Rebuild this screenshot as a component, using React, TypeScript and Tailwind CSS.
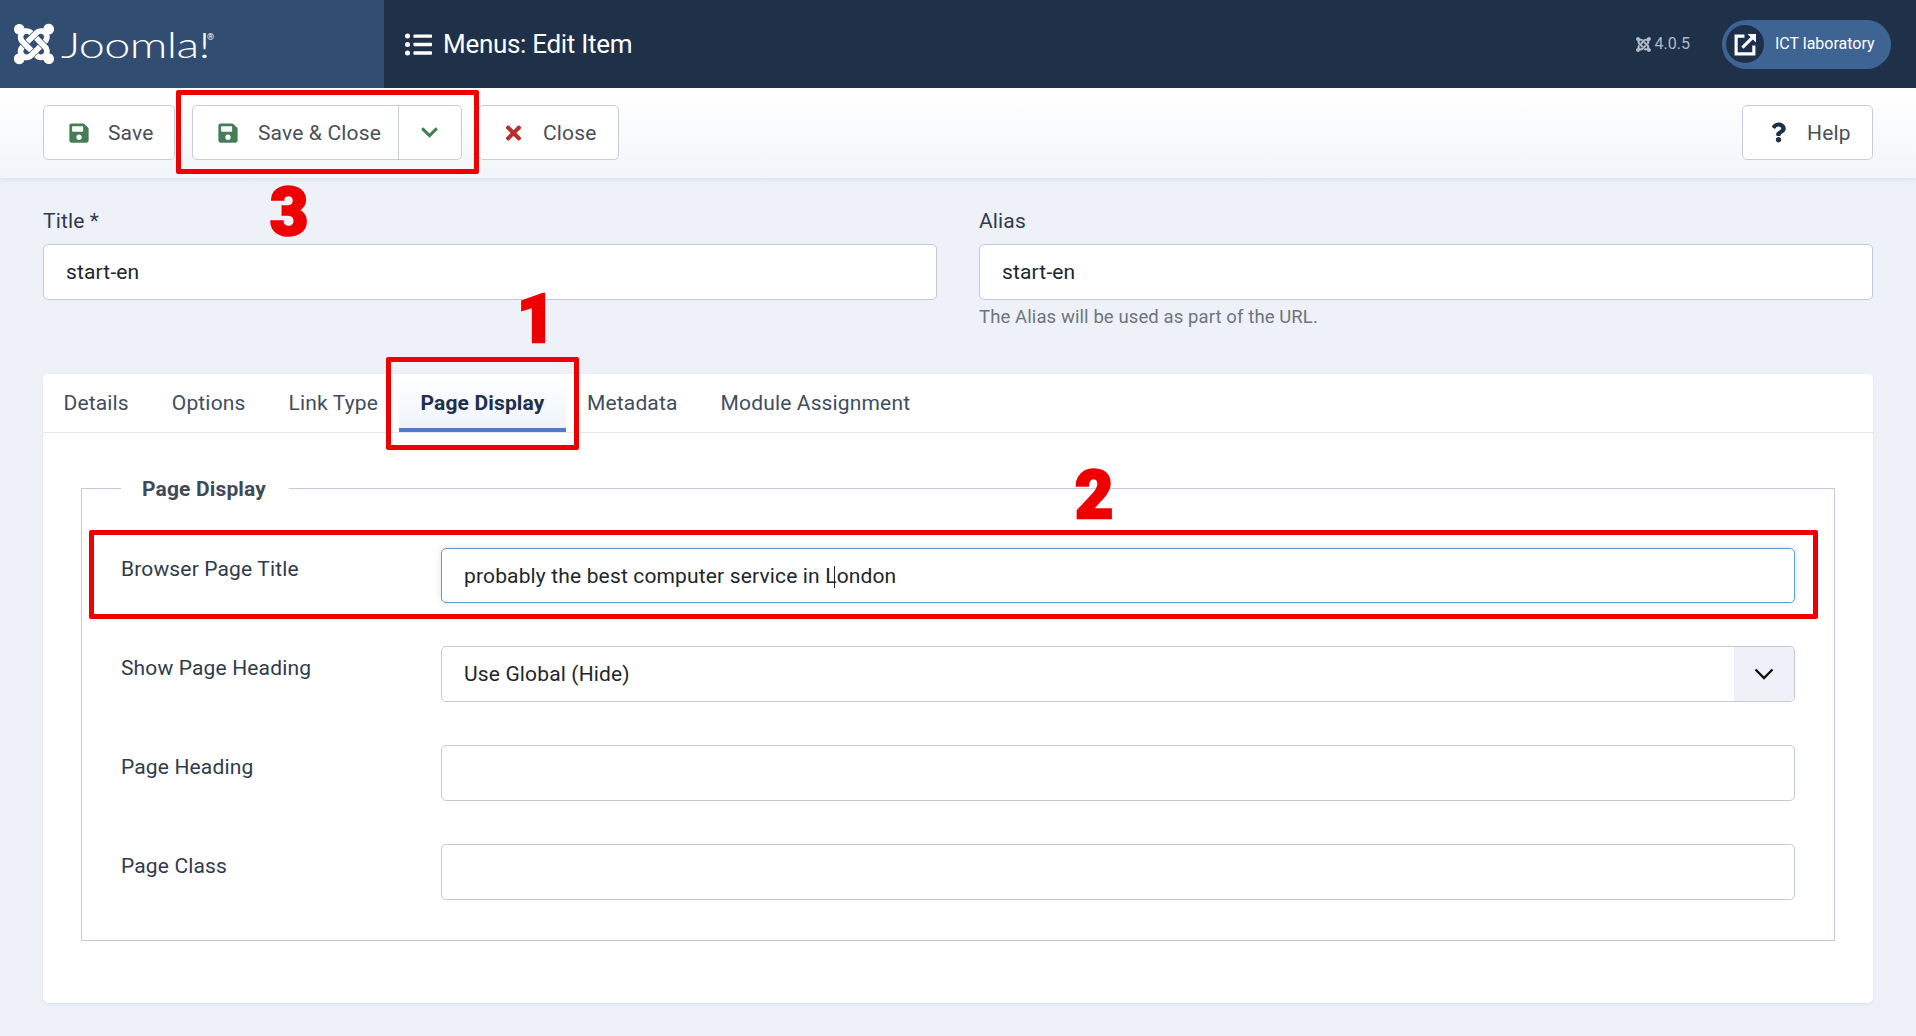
import type { FC, ReactNode } from "react";
import { FaChevronDown, FaJoomla, FaListUl, FaQuestion, FaSave, FaTimes } from "react-icons/fa";

const tabs = ["Details", "Options", "Link Type", "Page Display", "Metadata", "Module Assignment"];

const ToolButton: FC<{ icon: ReactNode; label: string; className?: string }> = ({ icon, label, className }) => (
	<div className={`flex h-[55px] items-center rounded-[5px] border border-[#c8ccd4] bg-white text-[21px] tracking-[0.15px] text-[#495057] ${className ?? ""}`}>
		{icon}
		<span className="pt-[2px]">{label}</span>
	</div>
);

const TextField: FC<{ value?: string }> = ({ value }) => (
	<div className="flex h-[56px] items-center rounded-[5px] border border-[#c4c9d6] bg-white px-[22px] pt-[2px] text-[21px] tracking-[0.15px] text-[#22262a]">
		{value}
	</div>
);

const Row: FC<{ label: string; children: ReactNode }> = ({ label, children }) => (
	<div className="flex">
		<div className="w-[320px] shrink-0 pt-[7px] text-[21px] leading-[30px] tracking-[0.15px] text-[#2f3b4c]">{label}</div>
		<div className="flex-1">{children}</div>
	</div>
);

const Annotation: FC<{ className: string }> = ({ className }) => (
	<div className={`absolute rounded-[2px] border-[5px] border-[#ee0000] ${className}`} />
);

const Digit: FC<{ value: string; className: string }> = ({ value, className }) => (
	<div className={`absolute font-['Roboto',sans-serif] text-[66px] leading-[70px] font-black text-[#ee0000] [-webkit-text-stroke:2.5px_#ee0000] ${className}`}>
		{value}
	</div>
);

export default function App() {
	return (
		<div className="relative h-[1036px] overflow-hidden bg-[#eef2f8] font-['Roboto',sans-serif]">
			<header className="flex h-[88px] items-center bg-[#1f3049] text-white">
				<div className="flex h-full w-[384px] shrink-0 items-center bg-[#324d72] pl-[11px]">
					<FaJoomla className="h-[46px] w-[46px]" />
					<span className="ml-[4px] inline-block w-[146px] origin-left scale-x-[1.3] font-['Lato',sans-serif] text-[36px] leading-none font-light tracking-[-0.5px]">Joomla!</span>
					<sup className="mt-[-6px] text-[9px]">®</sup>
				</div>
				<FaListUl className="ml-[21px] h-[27px] w-[27px]" />
				<h1 className="ml-[11px] text-[26px] font-normal tracking-[-0.3px]">Menus: Edit Item</h1>
				<div className="ml-auto flex items-center gap-[3px] text-[16px] text-[#b2bac6]">
					<FaJoomla className="h-[17px] w-[17px]" />
					<span>4.0.5</span>
				</div>
				<div className="mr-[25px] ml-[32px] flex h-[49px] w-[169px] items-center rounded-full bg-[#3e6494] pl-[4px]">
					<div className="flex h-[38px] w-[38px] items-center justify-center rounded-full bg-[#1c2f4b]">
						<svg viewBox="0 0 24 24" className="h-[25px] w-[25px]" fill="none" stroke="white" strokeWidth="3">
							<path d="M11 4H3v17h17v-8" />
							<path d="M9 15 21 3" />
							<path d="M14 2h8v8" strokeWidth="0" fill="white" />
						</svg>
					</div>
					<span className="ml-[11px] text-[16px]">ICT laboratory</span>
				</div>
			</header>

			<div className="flex h-[90px] items-center bg-gradient-to-b from-white to-[#f2f5f9] px-[43px] pb-[1px] shadow-[0_2px_6px_rgba(30,50,80,0.08)]">
				<ToolButton
					className="w-[132px] pl-[24px]"
					icon={<FaSave className="mr-[18px] h-[22px] w-[22px] text-[#457d54]" />}
					label="Save"
				/>
				<div className="ml-[17px] flex h-[55px] w-[270px] rounded-[5px] border border-[#c8ccd4] bg-white text-[21px] tracking-[0.15px] text-[#495057]">
					<div className="flex flex-1 items-center pl-[24px]">
						<FaSave className="mr-[19px] h-[22px] w-[22px] text-[#457d54]" />
						<span className="pt-[2px]">Save &amp; Close</span>
					</div>
					<div className="flex w-[63px] items-center justify-center border-l border-[#c8ccd4] pr-[1px]">
						<FaChevronDown className="h-[19px] w-[19px] text-[#457d54]" />
					</div>
				</div>
				<ToolButton
					className="ml-[16px] w-[141px] pl-[25px]"
					icon={<FaTimes className="mr-[20px] h-[22px] w-[19px] text-[#b82d2d]" />}
					label="Close"
				/>
				<ToolButton
					className="ml-auto w-[131px] pl-[28px]"
					icon={<FaQuestion className="mr-[21px] h-[21px] w-[15px] text-[#1c2f4b]" />}
					label="Help"
				/>
			</div>

			<main className="px-[43px] pt-[28px]">
				<div className="grid grid-cols-2 gap-[42px]">
					<div>
						<label className="mb-[8px] block text-[21px] leading-[30px] tracking-[0.15px] text-[#2f3b4c]">Title *</label>
						<TextField value="start-en" />
					</div>
					<div>
						<label className="mb-[8px] block text-[21px] leading-[30px] tracking-[0.15px] text-[#2f3b4c]">Alias</label>
						<TextField value="start-en" />
						<p className="mt-[4px] text-[18.5px] leading-[27px] tracking-[0.1px] text-[#6c757d]">The Alias will be used as part of the URL.</p>
					</div>
				</div>

				<section className="mt-[43px] h-[629px] rounded-[5px] bg-white shadow-[0_1px_3px_rgba(30,50,80,0.1)]">
					<div className="flex h-[59px] border-b border-[#e4e8ef]">
						{tabs.map((tab, i) =>
							tab === "Page Display" ? (
								<div
									key={tab}
									className="flex h-[58px] items-center border-b-[4px] border-[#4f7cc4] bg-gradient-to-b from-white to-[#f0f4f9] px-[21px] pt-[6px] text-[21px] font-bold tracking-[0.15px] text-[#1c2f4b]">
									{tab}
								</div>
							) : (
								<div
									key={tab}
									className={`flex h-[58px] items-center pt-[2px] text-[21px] tracking-[0.15px] text-[#3f4d5f] ${i === 0 ? "pr-[21.5px] pl-[20.5px]" : "px-[21.5px]"}`}>
									{tab}
								</div>
							),
						)}
					</div>

					<div className="px-[38px] pt-[40px]">
						<fieldset className="border border-[#c3c8da] px-[39px] pb-[40px]">
							<legend className="pt-[2px] pr-[23px] pl-[21px] text-[21px] leading-[28px] font-bold tracking-[0.15px] text-[#3f4a58]">Page Display</legend>
							<div className="flex flex-col gap-[43px] pt-[44px]">
								<Row label="Browser Page Title">
									<div className="mt-[1px] flex h-[55px] items-center rounded-[5px] border border-[#5a9fd8] bg-white px-[22px] pt-[2px] text-[21px] tracking-[0.15px] text-[#22262a] shadow-[0_0_6px_rgba(80,90,110,0.2)]">
										<span className="whitespace-pre">probably the best computer service in L</span>
										<span className="-ml-[3px] inline-block h-[22px] w-[1.5px] bg-[#22262a]" />
										<span className="ml-[1.5px]">ondon</span>
									</div>
								</Row>
								<Row label="Show Page Heading">
									<div className="flex h-[56px] items-center justify-between rounded-[5px] border border-[#c4c9d6] bg-white pl-[22px] text-[21px] tracking-[0.15px] text-[#22262a]">
										<span className="pt-[2px]">Use Global (Hide)</span>
										<div className="flex h-full w-[60px] items-center justify-center rounded-r-[5px] bg-[#eef1f8]">
											<svg viewBox="0 0 20 12" className="h-[12px] w-[20px]" fill="none" stroke="#111" strokeWidth="2.4">
												<path d="M1.5 1.5 10 10l8.5-8.5" />
											</svg>
										</div>
									</div>
								</Row>
								<Row label="Page Heading">
									<TextField />
								</Row>
								<Row label="Page Class">
									<TextField />
								</Row>
							</div>
						</fieldset>
					</div>
				</section>
			</main>

			<Annotation className="top-[90px] left-[176px] h-[84px] w-[303px]" />
			<Annotation className="top-[357px] left-[386px] h-[93px] w-[193px]" />
			<Annotation className="top-[530px] left-[89px] h-[89px] w-[1729px]" />
			<Digit value="1" className="top-[285px] left-[517px]" />
			<Digit value="2" className="top-[461px] left-[1075px]" />
			<Digit value="3" className="top-[178px] left-[270px]" />
		</div>
	);
}
